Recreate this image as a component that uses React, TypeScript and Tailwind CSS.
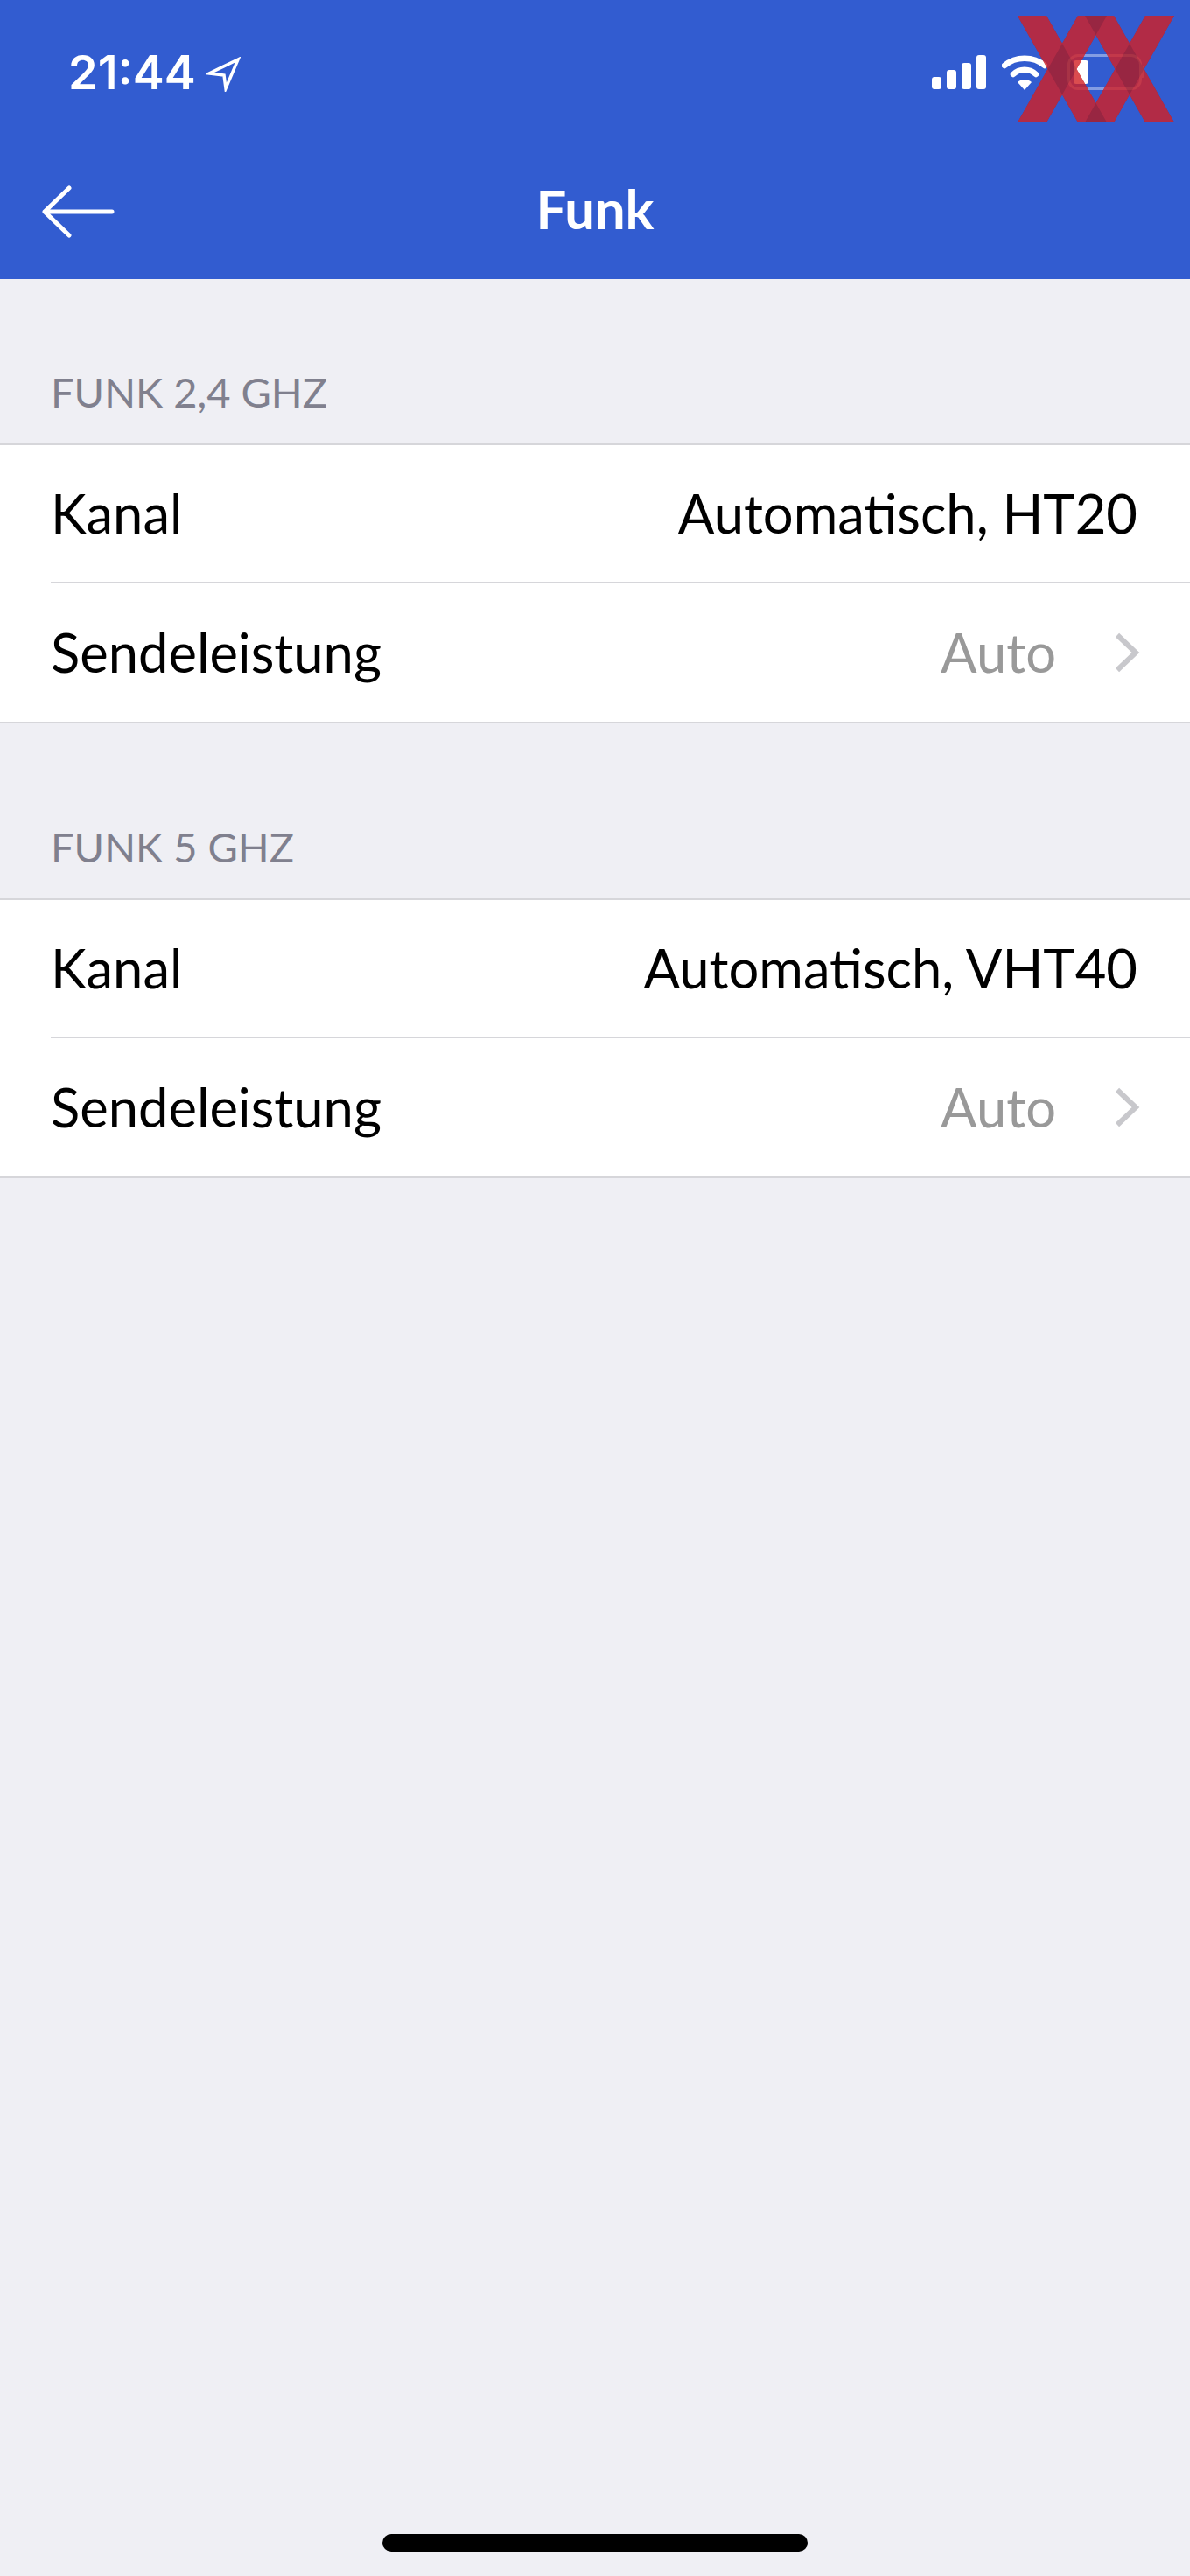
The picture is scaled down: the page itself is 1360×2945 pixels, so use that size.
const SECTIONS = [
  { title: "FUNK 2,4 GHZ", channel: "Automatisch, HT20" },
  { title: "FUNK 5 GHZ", channel: "Automatisch, VHT40" },
];

function StatusIcons() {
  return (
    <div className="flex items-center">
      {/* signal */}
      <svg width="62" height="40" viewBox="0 0 62 40" className="mr-[18px]">
        <rect x="0" y="25" width="11" height="14" rx="3" fill="#fff" />
        <rect x="17" y="17" width="11" height="22" rx="3" fill="#fff" />
        <rect x="34" y="9" width="11" height="30" rx="3" fill="#fff" />
        <rect x="51" y="0" width="11" height="39" rx="3" fill="#fff" />
      </svg>
      {/* wifi */}
      <svg width="52" height="40" viewBox="0 0 52 40" className="mr-[23px]">
        <path d="M3 12 C16 1 36 1 49 12" fill="none" stroke="#fff" strokeWidth="6.5" strokeLinecap="round" />
        <path d="M13 22 C20 15 32 15 39 22" fill="none" stroke="#fff" strokeWidth="6.5" strokeLinecap="round" />
        <path d="M26 40 L18 31 C22 27 30 27 34 31 Z" fill="#fff" />
      </svg>
      {/* battery */}
      <div className="flex items-center mr-[52px]">
        <div className="w-[85px] h-[41px] rounded-[12px] border-[3px] border-white/40 p-[4px]">
          <div className="w-[17px] h-full rounded-[3px] bg-white" />
        </div>
        <div className="w-[3px] h-[13px] rounded-r-[2px] bg-white/40" />
      </div>
    </div>
  );
}

function Watermark() {
  // two overlapping X, darker where the bands cross
  const bands = [
    "M1163 18 L1196 18 L1265 140 L1232 140 Z",
    "M1232 18 L1265 18 L1196 140 L1163 140 Z",
    "M1240 18 L1273 18 L1342 140 L1309 140 Z",
    "M1309 18 L1342 18 L1273 140 L1240 140 Z",
  ];
  return (
    <svg
      width="1360"
      height="160"
      viewBox="0 0 1360 160"
      className="absolute left-0 top-0 opacity-[0.8] pointer-events-none"
    >
      {bands.map((d) => (
        <path key={d} d={d} fill="#b2191f" />
      ))}
      <path d={bands.join(" ")} fill="#d32024" fillRule="evenodd" />
    </svg>
  );
}

function Row({ label, value, link, last }: { label: string; value: string; link?: boolean; last?: boolean }) {
  return (
    <div className={`flex h-[158px] items-center pr-[60px] ml-[58px] pb-[1px] ${last ? "" : "border-b-2 border-[#d6d6da]"}`}>
      <span className="flex-1 text-[61.5px] text-black">{label}</span>
      {link ? (
        <div className="flex items-center">
          <span className="text-[61.5px] text-[#999999]">{value}</span>
          <svg width="32" height="48" viewBox="0 0 32 48" className="ml-[65px] mr-[-4px]">
            <path d="M5 4 L26 24 L5 44" fill="none" stroke="#c8c8cc" strokeWidth="6" />
          </svg>
        </div>
      ) : (
        <span className="text-[61.5px] text-black">{value}</span>
      )}
    </div>
  );
}

export default function App() {
  return (
    <div className="relative flex min-h-[2945px] w-[1360px] flex-col bg-[#efeff4] font-['Lato',sans-serif]">
      {/* Header */}
      <div className="h-[319px] bg-[#325cd0] text-white">
        <div className="flex h-[166px] items-center justify-between pl-[78px] pb-[1px]">
          <div className="flex items-center">
            <span className="font-['Inter',sans-serif] text-[54px] font-semibold leading-none">21:44</span>
            <svg width="40" height="40" viewBox="0 0 40 40" className="ml-[11px] mt-[4px]">
              <path d="M37 3 L4 19 L21 21 L23 36 Z" fill="none" stroke="#fff" strokeWidth="3.5" />
            </svg>
          </div>
          <StatusIcons />
        </div>
        <div className="relative flex h-[153px] items-center justify-center pb-[8px]">
          <svg width="84" height="60" viewBox="0 0 84 60" className="absolute left-[48px] top-[46px]">
            <path d="M31 3 L3 30 L31 57 M3 30 L80 30" fill="none" stroke="#fff" strokeWidth="5" strokeLinecap="round" strokeLinejoin="round" />
          </svg>
          <span className="text-[61.5px] font-bold">Funk</span>
        </div>
      </div>

      {SECTIONS.map((s) => (
        <section key={s.title} className="mb-[-2px]">
          <div className="flex h-[188px] items-end pb-[35px] pl-[58px]">
            <span className="text-[47px] leading-none text-[#80808e]">{s.title}</span>
          </div>
          <div className="border-y-2 border-[#d6d6da] bg-white">
            <Row label="Kanal" value={s.channel} />
            <Row label="Sendeleistung" value="Auto" link last />
          </div>
          <div className="h-[14px]" />
        </section>
      ))}

      {/* Home indicator */}
      <div className="mt-auto flex justify-center pb-[28px]">
        <div className="h-[20px] w-[486px] rounded-[10px] bg-black" />
      </div>

      <Watermark />
    </div>
  );
}
